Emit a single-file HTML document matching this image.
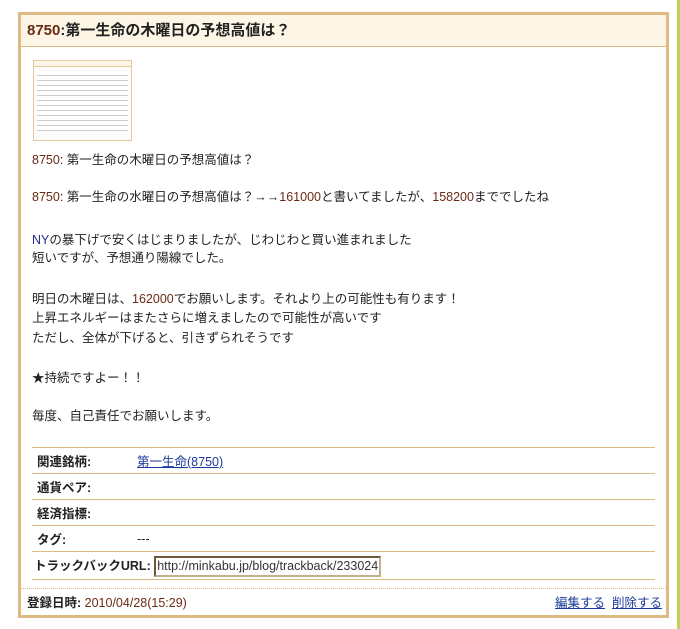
<!DOCTYPE html>
<html><head><style>
body{margin:0;background:#fff;font-family:"Liberation Sans","Noto Sans CJK JP",sans-serif;font-size:12.5px;color:#222;width:680px;height:629px;position:relative;overflow:hidden}
.box{position:absolute;left:18px;top:12px;width:645px;height:600px;border:3px solid #dfb984}
.hd{height:31px;background:#fdf5e6;border-bottom:1px solid #dfb984;font-weight:bold;font-size:15px;line-height:32px;padding-left:6px;color:#222}
.n{color:#6b2a14}
.t{position:absolute;white-space:nowrap;line-height:14px}
.thumb{position:absolute;left:12px;top:45px;width:97px;height:79px;border:1px solid #e6c99a;background:#fcfcfc}
table{position:absolute;left:11px;top:432px;width:623px;border-collapse:collapse;font-size:12.5px;table-layout:fixed}
td{border-bottom:1px solid #dfb984;height:25px;padding:0}
tr:first-child td{border-top:1px solid #dfb984}
td.l{font-weight:bold;width:100px;padding-left:5px;white-space:nowrap}
a{color:#1a3a9a}
.inp{display:inline-block;border:2px solid #6a5a3a;border-right-color:#c0b090;border-bottom-color:#c0b090;padding:0 1px;line-height:17px;color:#333}
.ft{position:absolute;left:0;right:0;top:573px;border-top:1px dotted #dfb984;height:27px;line-height:28px;padding-left:6px}
.gr{position:absolute;left:677px;top:0;width:3px;height:629px;background:#c0cf5a}
</style></head><body>
<div class="gr"></div>
<div class="box">
<div class="hd"><span class="n">8750</span>:第一生命の木曜日の予想高値は？</div>
<div class="thumb">
<div style="height:5px;background:#fdf5e6;border-bottom:1px solid #e6c99a"></div>
<div style="margin:4px 3px;height:60px;background:repeating-linear-gradient(#fff 0 4px,#ccc 4px 5px)"></div>
</div>
<div class="t" style="left:11px;top:138px"><span class="n">8750</span>: 第一生命の木曜日の予想高値は？</div>
<div class="t" style="left:11px;top:175px"><span class="n">8750</span>: 第一生命の水曜日の予想高値は？→→<span class="n">161000</span>と書いてましたが、<span class="n">158200</span>まででしたね</div>
<div class="t" style="left:11px;top:218px"><span style="color:#2a2a8a">NY</span>の暴下げで安くはじまりましたが、じわじわと買い進まれました</div>
<div class="t" style="left:11px;top:236px">短いですが、予想通り陽線でした。</div>
<div class="t" style="left:11px;top:277px">明日の木曜日は、<span class="n">162000</span>でお願いします。それより上の可能性も有ります！</div>
<div class="t" style="left:11px;top:296px">上昇エネルギーはまたさらに増えましたので可能性が高いです</div>
<div class="t" style="left:11px;top:316px">ただし、全体が下げると、引きずられそうです</div>
<div class="t" style="left:11px;top:356px">★持続ですよー！！</div>
<div class="t" style="left:11px;top:394px">毎度、自己責任でお願いします。</div>
<table>
<col style="width:105px"><col>
<tr><td class="l">関連銘柄:</td><td><a href="#">第一生命(8750)</a></td></tr>
<tr><td class="l">通貨ペア:</td><td></td></tr>
<tr><td class="l">経済指標:</td><td></td></tr>
<tr><td class="l">タグ:</td><td>---</td></tr>
<tr><td colspan="2" style="padding-left:2px;height:27px;white-space:nowrap"><b>トラックバックURL:</b> <span class="inp">http://minkabu.jp/blog/trackback/233024</span></td></tr>
</table>
<div class="ft"><b>登録日時:</b> <span class="n">2010/04/28(15:29)</span><span style="position:absolute;right:4px"><a href="#">編集する</a>&nbsp; <a href="#">削除する</a></span></div>
</div>
</body></html>
